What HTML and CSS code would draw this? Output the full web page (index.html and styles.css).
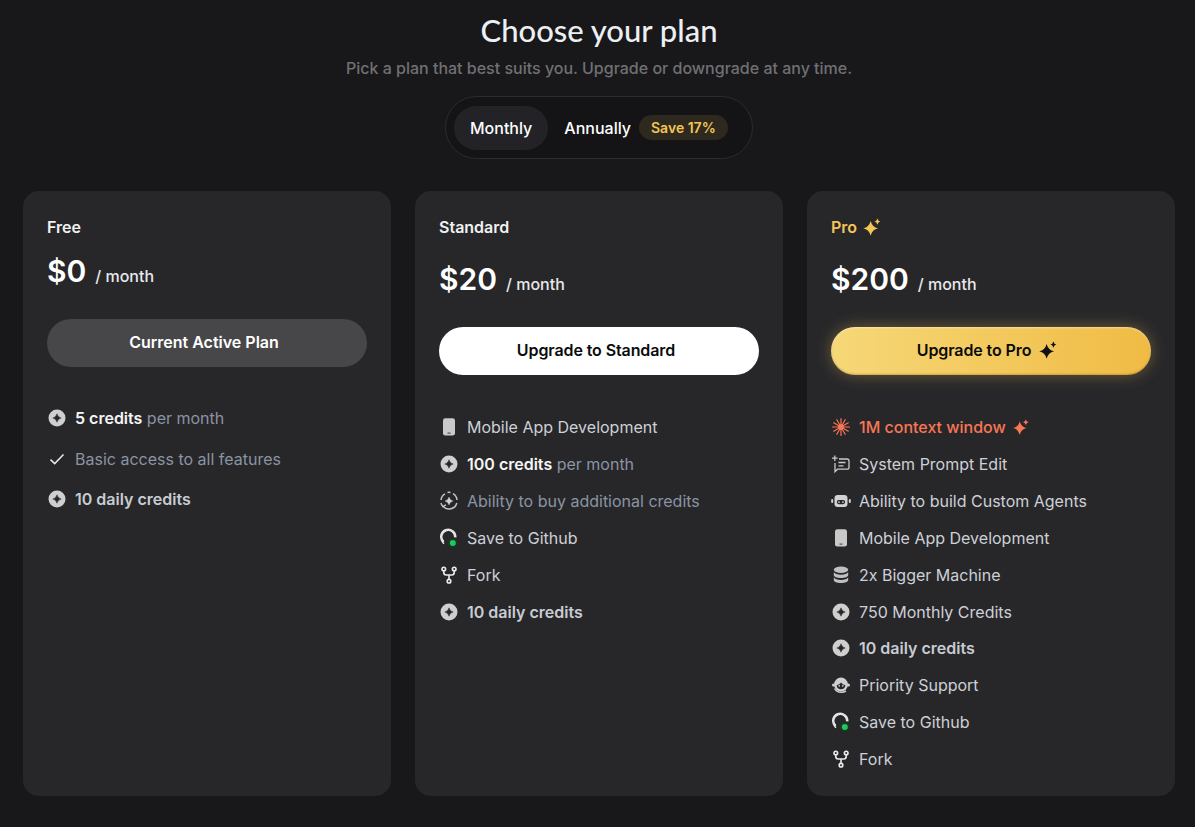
FILE: index.html
```html
<!DOCTYPE html>
<html lang="en">
<head>
<meta charset="utf-8">
<title>Choose your plan</title>
<link rel="stylesheet" href="styles.css">
</head>
<body>
<svg class="defs" width="0" height="0" aria-hidden="true">
  <symbol id="i-credit" viewBox="0 0 20 20"><circle cx="10" cy="10" r="8.500" fill="#cfcfcf"/><path d="M10 5.800Q10.800 9.200 14.200 10 10.800 10.800 10 14.200 9.200 10.800 5.800 10 9.200 9.200 10 5.800z" fill="#27272a" stroke="#27272a" stroke-width=".5" stroke-linejoin="round"/></symbol>
  <symbol id="i-phone" viewBox="0 0 20 20"><rect x="4" y="1.200" width="12" height="17.400" rx="2.400" fill="#c9c9c9"/><rect x="8.500" y="15.600" width="3" height="1" fill="#3a3a3c"/></symbol>
  <symbol id="i-check" viewBox="0 0 20 20"><path d="M3.500 10.600l4.200 4L16.500 5.600" fill="none" stroke="#e8e8e8" stroke-width="1.500"/></symbol>
  <symbol id="i-buy" viewBox="0 0 20 20"><path d="M2 9a8 8 0 0 1 4-6.200M8.500 1.500a8 8 0 0 1 3 0M14 2.600A8 8 0 0 1 18 9M17.800 12a8 8 0 0 1-13.800 3.200" fill="none" stroke="#c4c4c4" stroke-width="1.500"/><path d="M1.800 12.200l2 3.400 3.200-1.800" fill="none" stroke="#c4c4c4" stroke-width="1.500"/><path d="M10 6.200Q10.800 9.200 13.800 10 10.800 10.800 10 13.800 9.200 10.800 6.200 10 9.200 9.200 10 6.200z" fill="#d4d4d4" stroke="#d4d4d4" stroke-width=".5"/></symbol>
  <symbol id="i-git" viewBox="0 0 20 20"><path d="M4.600 14A7 7 0 1 1 16.200 9.400" fill="none" stroke="#e4e4e4" stroke-width="2.500"/><path d="M2.800 12.400l2 3.400" fill="none" stroke="#e4e4e4" stroke-width="1.500"/><circle cx="13.800" cy="15" r="5" fill="#17381f"/><circle cx="13.800" cy="15" r="3" fill="#22c55e"/></symbol>
  <symbol id="i-fork" viewBox="0 0 20 20"><g fill="none" stroke="#ececec" stroke-width="1.600"><circle cx="4.800" cy="4" r="1.800"/><circle cx="15.200" cy="4" r="1.800"/><circle cx="10" cy="16.200" r="1.800"/><path d="M4.800 6v1.600c0 1.500 1 2.400 2.400 2.400h5.600c1.400 0 2.400-.9 2.400-2.400V6M10 10v4.300"/></g></symbol>
  <symbol id="i-burst" viewBox="0 0 20 20"><g stroke="#f87654" stroke-width="1.200" stroke-linecap="round"><path d="M10 1.500v17M1.500 10h17M5.800 2.700l8.400 14.600M14.200 2.700L5.800 17.300M2.700 5.800l14.600 8.400M17.300 5.800L2.700 14.200"/></g><circle cx="10" cy="10" r="2.800" fill="#f87654"/></symbol>
  <symbol id="i-prompt" viewBox="0 0 20 20"><g fill="none" stroke="#c9c9c9" stroke-width="1.300"><path d="M8 5h8a2 2 0 0 1 2 2v6.200a2 2 0 0 1-2 2H6.500l-2.500 2.500V9"/><path d="M7.500 8.500h7M7.500 11.800h5"/><path d="M3.800 1.500v5.500M1 4.200h5.600"/></g></symbol>
  <symbol id="i-bot" viewBox="0 0 20 20"><rect x="3.500" y="4" width="13" height="12" rx="3.200" fill="#d2d2d2"/><rect x="5.800" y="9" width="8.400" height="4.200" rx="2.100" fill="#27272a"/><circle cx="8" cy="11.100" r=".9" fill="#d2d2d2"/><circle cx="12" cy="11.100" r=".9" fill="#d2d2d2"/><rect x=".2" y="8" width="2" height="4" rx="1" fill="#d2d2d2"/><rect x="17.800" y="8" width="2" height="4" rx="1" fill="#d2d2d2"/></symbol>
  <symbol id="i-db" viewBox="0 0 20 20"><g fill="#c0c0c0"><ellipse cx="10" cy="4.800" rx="7.200" ry="3.200"/><path d="M2.800 7c1 1.900 3.800 2.700 7.200 2.700s6.200-.8 7.200-2.700v3.200c0 1.500-3.200 2.800-7.200 2.800s-7.200-1.300-7.200-2.800z"/><path d="M2.800 12.200c1 1.900 3.800 2.700 7.200 2.700s6.200-.8 7.200-2.700V15c0 1.700-3.200 3.100-7.200 3.100S2.800 16.700 2.800 15z"/></g></symbol>
  <symbol id="i-support" viewBox="0 0 20 20"><circle cx="10" cy="9.600" r="7" fill="#d0d0d0"/><path d="M5.600 10.200c2-.3 3.400-1.200 4.400-2.700 1.100 1.500 2.500 2.400 4.400 2.700-.1 2.500-2 4-4.400 4s-4.300-1.500-4.400-4z" fill="#27272a"/><circle cx="8.200" cy="10.800" r=".9" fill="#d0d0d0"/><circle cx="11.800" cy="10.800" r=".9" fill="#d0d0d0"/><path d="M3.500 13.500c1.400 2.600 3.800 3.800 6.800 3.800 1.900 0 3.500-.5 4.700-1.500" fill="none" stroke="#d0d0d0" stroke-width="1.500"/><circle cx="2.600" cy="10" r="1.600" fill="#d0d0d0"/><circle cx="17.400" cy="10" r="1.600" fill="#d0d0d0"/></symbol>
  <symbol id="i-sparkle" viewBox="0 0 20 20"><path d="M8.500 3.200Q10.200 9.800 16.700 11.400 10.200 13 8.500 19.600 6.800 13 .3 11.400 6.800 9.800 8.500 3.200zM16 .6Q16.600 3.400 19.400 4 16.600 4.600 16 7.400 15.400 4.600 12.600 4 15.400 3.400 16 .6z"/></symbol>
</svg>

<main class="page">
  <header class="intro">
    <h1 class="title">Choose your plan</h1>
    <p class="subtitle">Pick a plan that best suits you. Upgrade or downgrade at any time.</p>
    <div class="toggle">
      <span class="toggle-option toggle-option--active">Monthly</span>
      <span class="toggle-option">Annually <span class="save">Save 17%</span></span>
    </div>
  </header>

  <section class="plans">
    <article class="plan">
      <h2 class="plan-name plan-name--tight">Free</h2>
      <div class="price"><span class="amount">$0</span><span class="period">/ month</span></div>
      <button class="cta cta--current">Current Active Plan</button>
      <ul class="features features--loose">
        <li class="feature"><svg class="icon"><use href="#i-credit"/></svg><span><b class="strong">5 credits</b> <span class="muted">per month</span></span></li>
        <li class="feature"><svg class="icon"><use href="#i-check"/></svg><span class="muted">Basic access to all features</span></li>
        <li class="feature"><svg class="icon"><use href="#i-credit"/></svg><b class="semi">10 daily credits</b></li>
      </ul>
    </article>

    <article class="plan">
      <h2 class="plan-name">Standard</h2>
      <div class="price"><span class="amount">$20</span><span class="period">/ month</span></div>
      <button class="cta cta--white">Upgrade to Standard</button>
      <ul class="features">
        <li class="feature"><svg class="icon"><use href="#i-phone"/></svg><span>Mobile App Development</span></li>
        <li class="feature"><svg class="icon"><use href="#i-credit"/></svg><span><b class="strong">100 credits</b> <span class="muted">per month</span></span></li>
        <li class="feature"><svg class="icon"><use href="#i-buy"/></svg><span class="muted">Ability to buy additional credits</span></li>
        <li class="feature"><svg class="icon"><use href="#i-git"/></svg><span>Save to Github</span></li>
        <li class="feature"><svg class="icon"><use href="#i-fork"/></svg><span>Fork</span></li>
        <li class="feature"><svg class="icon"><use href="#i-credit"/></svg><b class="semi">10 daily credits</b></li>
      </ul>
    </article>

    <article class="plan">
      <h2 class="plan-name plan-name--pro">Pro <svg class="sparkle sparkle--gold"><use href="#i-sparkle"/></svg></h2>
      <div class="price"><span class="amount">$200</span><span class="period">/ month</span></div>
      <button class="cta cta--gold">Upgrade to Pro <svg class="sparkle sparkle--dark"><use href="#i-sparkle"/></svg></button>
      <ul class="features">
        <li class="feature feature--hot"><svg class="icon"><use href="#i-burst"/></svg><span>1M context window</span><svg class="sparkle sparkle--hot"><use href="#i-sparkle"/></svg></li>
        <li class="feature"><svg class="icon"><use href="#i-prompt"/></svg><span>System Prompt Edit</span></li>
        <li class="feature"><svg class="icon"><use href="#i-bot"/></svg><span>Ability to build Custom Agents</span></li>
        <li class="feature"><svg class="icon"><use href="#i-phone"/></svg><span>Mobile App Development</span></li>
        <li class="feature"><svg class="icon"><use href="#i-db"/></svg><span>2x Bigger Machine</span></li>
        <li class="feature"><svg class="icon"><use href="#i-credit"/></svg><span>750 Monthly Credits</span></li>
        <li class="feature"><svg class="icon"><use href="#i-credit"/></svg><b class="semi">10 daily credits</b></li>
        <li class="feature"><svg class="icon"><use href="#i-support"/></svg><span>Priority Support</span></li>
        <li class="feature"><svg class="icon"><use href="#i-git"/></svg><span>Save to Github</span></li>
        <li class="feature"><svg class="icon"><use href="#i-fork"/></svg><span>Fork</span></li>
      </ul>
    </article>
  </section>
</main>
</body>
</html>
```

FILE: styles.css
```css
* { box-sizing: border-box; }
html, body { margin: 0; height: 100%; }
body {
  background: #18181a;
  color: #fff;
  font-family: Inter, "Liberation Sans", sans-serif;
  overflow: hidden;
}
.defs { position: absolute; }
.page { padding: 12px 20px 0 23px; }
.intro { display: flex; flex-direction: column; align-items: center; }
.title {
  margin: 0;
  font-family: Lato, Inter, sans-serif;
  font-size: 31px;
  line-height: 36px;
  font-weight: 500;
  color: #eceff3;
}
.subtitle {
  margin: 8px 0 0;
  font-size: 16px;
  line-height: 24px;
  font-weight: 500;
  color: #707074;
}
.toggle {
  margin-top: 16px;
  display: flex;
  align-items: center;
  height: 63px;
  width: 308px;
  padding: 0 8px;
  border: 1px solid #2c2c2f;
  border-radius: 32px;
  background: #141416;
}
.toggle-option {
  display: flex;
  align-items: center;
  gap: 8px;
  height: 44px;
  padding: 0 16px;
  border-radius: 22px;
  font-size: 16px;
  font-weight: 500;
  color: #fff;
}
.toggle-option--active { background: #232327; }
.save {
  display: inline-flex;
  align-items: center;
  height: 25px;
  padding: 0 12px;
  border-radius: 13px;
  background: #2e291e;
  color: #f3c557;
  font-size: 14px;
  font-weight: 600;
}
.plans {
  margin-top: 32px;
  display: grid;
  grid-template-columns: repeat(3, 368px);
  gap: 24px;
}
.plan {
  height: 605px;
  padding: 24px;
  border-radius: 16px;
  background: #27272a;
}
.plan-name {
  display: flex;
  align-items: center;
  gap: 6px;
  height: 24px;
  margin: 0 0 16px;
  font-size: 16px;
  font-weight: 600;
  color: #f1f1f1;
}
.plan-name--tight { margin-bottom: 8px; }
.plan-name--pro { color: #f3c557; }
.price { display: flex; align-items: center; gap: 9px; height: 48px; }
.amount { font-size: 30px; font-weight: 600; color: #fff; }
.period { font-size: 16px; font-weight: 500; color: #e8e8ec; padding-top: 9px; }
.cta {
  display: flex;
  align-items: center;
  justify-content: center;
  gap: 8px;
  width: 320px;
  height: 48px;
  margin: 24px 0 40px;
  padding: 0 6px 2px 0;
  border: 0;
  border-radius: 24px;
  font-family: Inter, sans-serif;
  font-size: 16px;
  font-weight: 600;
}
.cta--current { background: #474749; color: #fff; margin-bottom: 39px; }
.cta--white { background: #fff; color: #0b0b0c; letter-spacing: -.1px; }
.cta--gold {
  background: linear-gradient(90deg, #f6d878, #f0bb44);
  color: #0b0b0c;
  letter-spacing: -.1px;
  padding-right: 8px;
  box-shadow: 0 0 16px rgba(243, 197, 87, .35), inset 0 1px 2px rgba(255, 255, 255, .45), inset 0 -1px 2px rgba(120, 80, 0, .35);
}
.features {
  list-style: none;
  margin: 0;
  padding: 0;
  display: flex;
  flex-direction: column;
  gap: 12.91px;
}
.features--loose { gap: 16.5px; }
.feature {
  display: flex;
  align-items: center;
  gap: 8px;
  height: 24px;
  font-size: 16px;
  line-height: 24px;
  color: #cdd0d6;
}
.feature--hot { color: #f87654; font-weight: 500; }
.icon { width: 20px; height: 20px; flex: none; }
.strong { font-weight: 600; color: #f5f5f5; }
.semi { font-weight: 600; color: #c8ccd2; }
.muted { color: #8a94a3; }
.sparkle { width: 18px; height: 18px; flex: none; }
.sparkle--gold { fill: #f3c557; }
.sparkle--dark { fill: #111; }
.sparkle--hot { fill: #f87654; width: 16px; height: 16px; margin-left: -1px; }
```
